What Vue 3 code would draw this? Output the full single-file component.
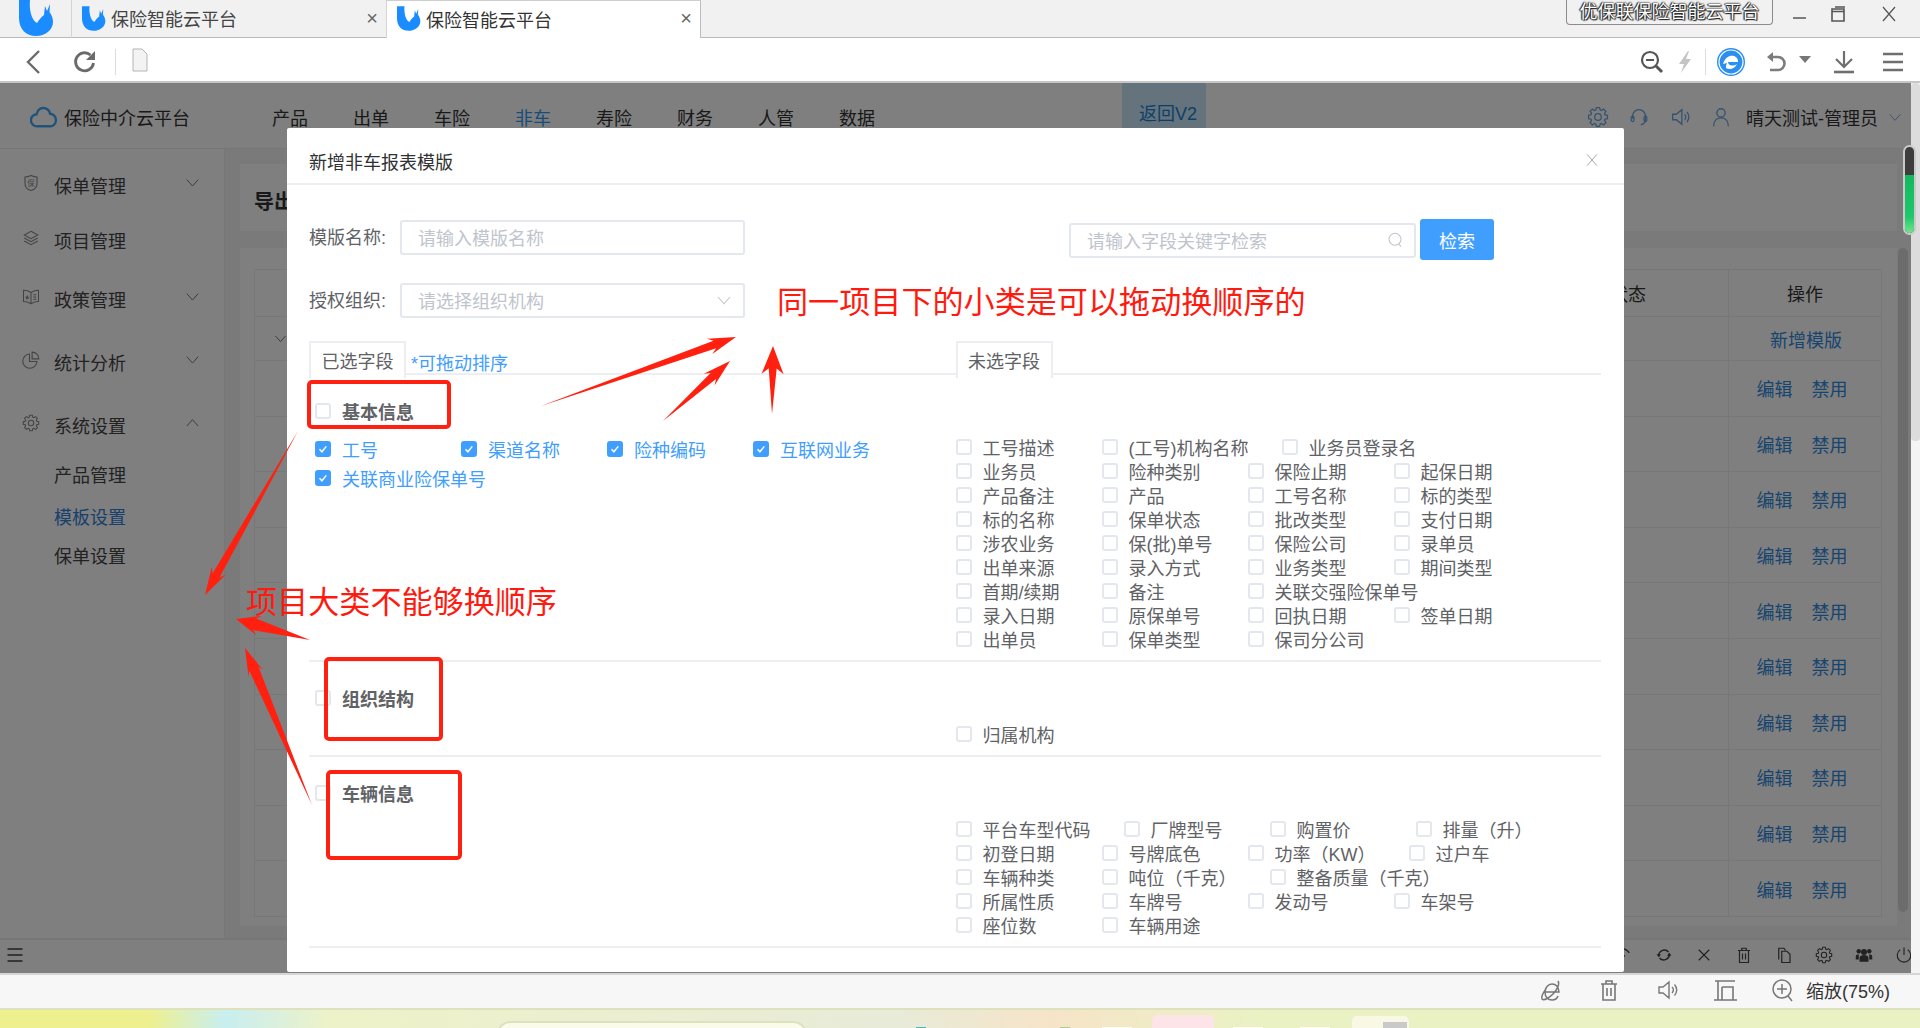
<template>
  <div class="screen">
    <!-- browser chrome -->
    <div class="tabbar">
      <div class="corner">
        <svg class="logo-big" viewBox="19 0 35 36"><path fill="#1a8cff" :d="logoPath" /></svg>
      </div>
      <div class="tab">
        <svg class="logo-small" viewBox="19 0 35 36"><path fill="#1a8cff" :d="logoPath" /></svg>
        <span class="tab-title">保险智能云平台</span>
        <span class="tab-x">×</span>
      </div>
      <div class="tab tab-active">
        <svg class="logo-small" viewBox="19 0 35 36"><path fill="#1a8cff" :d="logoPath" /></svg>
        <span class="tab-title">保险智能云平台</span>
        <span class="tab-x">×</span>
      </div>
      <div class="win-label">优保联保险智能云平台</div>
      <div class="win-btns">
        <svg class="win-icon" viewBox="0 0 20 20" v-html="icons.min"></svg>
        <svg class="win-icon" viewBox="0 0 20 20" v-html="icons.max"></svg>
        <svg class="win-icon" viewBox="0 0 20 20" v-html="icons.winClose"></svg>
      </div>
    </div>

    <div class="toolbar">
      <svg class="tool back" viewBox="0 0 24 24" v-html="icons.back"></svg>
      <svg class="tool reload" viewBox="0 0 24 24" v-html="icons.reload"></svg>
      <span class="tool-sep"></span>
      <svg class="doc" viewBox="0 0 16 24" v-html="icons.doc"></svg>
      <svg class="tool t-search" viewBox="0 0 24 24" v-html="icons.zoomOut"></svg>
      <svg class="tool t-bolt" viewBox="0 0 24 24" v-html="icons.bolt"></svg>
      <span class="tool-sep sep-right"></span>
      <svg class="t-edge" viewBox="0 0 30 30" v-html="icons.edge"></svg>
      <svg class="tool t-undo" viewBox="0 0 24 24" v-html="icons.undo"></svg>
      <span class="caret"></span>
      <svg class="tool t-down" viewBox="0 0 24 24" v-html="icons.download"></svg>
      <svg class="tool t-menu" viewBox="0 0 24 24" v-html="icons.menu"></svg>
    </div>

    <!-- app behind the dialog -->
    <div class="page">
      <header class="app-head">
        <svg class="cloud" viewBox="0 0 30 24" v-html="icons.cloud"></svg>
        <span class="brand">保险中介云平台</span>
        <nav class="nav">
          <span v-for="n in navItems" :key="n" :class="{ 'nav-on': n === '非车' }">{{ n }}</span>
        </nav>
        <div class="back-v2">返回V2</div>
        <div class="head-right">
          <svg v-for="i in ['gear', 'headset', 'speaker', 'user']" :key="i" class="head-icon" viewBox="0 0 24 24" v-html="icons[i]"></svg>
          <span class="user-name">晴天测试-管理员</span>
          <svg class="user-chev" viewBox="0 0 24 24" v-html="icons.chevDown"></svg>
        </div>
      </header>

      <div class="app-mid">
        <aside class="side">
          <div v-for="m in menu" :key="m.label" class="side-item" :class="{ 'side-on': m.active }" :style="{ height: m.h + 'px' }">
            <svg v-if="m.icon" class="side-icon" viewBox="0 0 24 24" v-html="icons[m.icon]"></svg>
            <span class="side-label" :class="{ 'side-sub': !m.icon }">{{ m.label }}</span>
            <svg v-if="m.chev" class="side-chev" viewBox="0 0 24 24" v-html="icons[m.chev]"></svg>
          </div>
        </aside>
        <main class="content">
          <div class="card card-top"><b>导出模版</b></div>
          <div class="card card-table">
            <div class="tbl-row tbl-head">
              <div class="cell-main"><span class="state">状态</span></div>
              <div class="cell-op">操作</div>
            </div>
            <div class="tbl-row tbl-first">
              <div class="cell-main"><svg class="row-chev" viewBox="0 0 24 24" v-html="icons.chevDown"></svg></div>
              <div class="cell-op link">新增模版</div>
            </div>
            <div v-for="r in 10" :key="r" class="tbl-row">
              <div class="cell-main"></div>
              <div class="cell-op link cell-edit"><span>编辑</span><span>禁用</span></div>
            </div>
          </div>
        </main>
      </div>

      <footer class="app-foot">
        <svg class="foot-menu" viewBox="0 0 24 24" v-html="icons.menu"></svg>
        <div class="foot-icons">
          <svg v-for="i in footIcons" :key="i" class="foot-icon" viewBox="0 0 24 24" v-html="icons[i]"></svg>
        </div>
      </footer>

      <div class="inner-scroll"></div>
      <div class="mask"></div>
      <div class="page-scroll"><div class="page-thumb"></div></div>
      <div class="speed"><div class="speed-fill"></div></div>
    </div>

    <div class="statusbar">
      <svg v-for="i in statusIcons" :key="i" class="status-icon" viewBox="0 0 24 24" v-html="icons[i]"></svg>
      <span class="zoom-text">缩放(75%)</span>
    </div>

    <div class="desktop">
      <div class="d-search"></div>
      <div class="d-dot d-teal"></div>
      <div class="d-dot d-green"></div>
      <div class="d-chip d-c1"></div>
      <div class="d-pink"></div>
      <div class="d-chip d-c2"></div>
      <div class="d-chip d-c3"></div>
      <div class="d-tile"><span></span></div>
      <div class="d-time">17:51</div>
    </div>

    <!-- dialog -->
    <section class="modal">
      <div class="modal-head">
        <span class="modal-title">新增非车报表模版</span>
        <svg class="modal-x" viewBox="0 0 20 20" v-html="icons.thinX"></svg>
      </div>
      <div class="modal-body">
        <div class="form-row">
          <label class="form-label">模版名称:</label>
          <div class="input"><span>请输入模版名称</span></div>
          <div class="input input-search">
            <span>请输入字段关键字检索</span>
            <svg class="input-icon" viewBox="0 0 24 24" v-html="icons.lens"></svg>
          </div>
          <button class="btn">检索</button>
        </div>
        <div class="form-row row-org">
          <label class="form-label">授权组织:</label>
          <div class="input">
            <span>请选择组织机构</span>
            <svg class="input-icon" viewBox="0 0 24 24" v-html="icons.chevDown"></svg>
          </div>
        </div>

        <div class="tabs">
          <div class="tabs-left">
            <span class="field-tab">已选字段</span>
            <span class="drag-tip">*可拖动排序</span>
          </div>
          <span class="field-tab">未选字段</span>
        </div>

        <div v-for="s in sections" :key="s.title" class="section">
          <div class="sec-left">
            <div class="check-item sec-title">
              <i class="box"></i>
              <b>{{ s.title }}</b>
            </div>
            <div v-if="s.picked" class="picked">
              <div v-for="p in s.picked" :key="p" class="check-item picked-item">
                <i class="box box-on">
                  <svg viewBox="0 0 16 16"><path d="M4.5 8.2l2.4 2.6 4.4-5.4" fill="none" stroke="#fff" stroke-width="1.5" /></svg>
                </i>
                <span>{{ p }}</span>
              </div>
            </div>
          </div>
          <div class="sec-right">
            <div v-for="(row, i) in s.rows" :key="i" class="opt-row">
              <div v-for="o in row" :key="o" class="check-item opt">
                <i class="box"></i>
                <span>{{ o }}</span>
              </div>
            </div>
          </div>
        </div>
      </div>
    </section>

    <!-- red hand-drawn annotations on top of the screenshot -->
    <svg class="marks" viewBox="0 0 1920 1028">
      <rect v-for="(b, i) in boxes" :key="i" :x="b[0]" :y="b[1]" :width="b[2]" :height="b[3]" rx="3" fill="none" stroke="#ff2010" stroke-width="4" />
      <polygon v-for="(a, i) in arrows" :key="i" :points="a" fill="#ff2010" />
    </svg>
    <div class="note note-a">同一项目下的小类是可以拖动换顺序的</div>
    <div class="note note-b">项目大类不能够换顺序</div>
  </div>
</template>

<script setup>
const logoPath = 'M19 0H30C29 8 31 20 37 23C39 20 41 17 44 15L45 6L47 11L50 4L49.5 12C52 15 53 19 53 22C53 30 45 36 36 36C26 36 19 29 19 18Z'

const navItems = ['产品', '出单', '车险', '非车', '寿险', '财务', '人管', '数据']

const menu = [
  { label: '保单管理', icon: 'shield', chev: 'chevDown', h: 54 },
  { label: '项目管理', icon: 'layers', h: 56 },
  { label: '政策管理', icon: 'book', chev: 'chevDown', h: 62 },
  { label: '统计分析', icon: 'pie', chev: 'chevDown', h: 64 },
  { label: '系统设置', icon: 'gear', chev: 'chevUp', h: 62 },
  { label: '产品管理', h: 36 },
  { label: '模板设置', active: true, h: 48 },
  { label: '保单设置', h: 30 }
]

const footIcons = ['wifi', 'sync', 'cross', 'trash', 'copy', 'gear', 'team', 'power']
const statusIcons = ['ie', 'trash', 'speaker', 'frame', 'zoomIn']

// gear outline, 8 teeth
const gearPath = () => {
  const pts = []
  for (let i = 0; i < 8; i++) {
    const a = (i * Math.PI) / 4
    for (const [off, r] of [[-0.3, 8], [-0.17, 10.5], [0.17, 10.5], [0.3, 8]]) {
      pts.push(`${(12 + r * Math.cos(a + off)).toFixed(1)} ${(12 + r * Math.sin(a + off)).toFixed(1)}`)
    }
  }
  return 'M' + pts.join('L') + 'Z'
}

const icons = {
  min: '<path d="M3 14h13" stroke="#555" stroke-width="1.5"/>',
  max: '<path d="M4 5h12v12H4zM4 7.5h12M7 3h10" fill="none" stroke="#555" stroke-width="1.6"/>',
  winClose: '<path d="M4 3l12 14M16 3L4 17" stroke="#555" stroke-width="1.2"/>',
  back: '<path d="M17 1L6 12l11 11" fill="none" stroke="#6b6b6b" stroke-width="2.4"/>',
  reload: '<path d="M20.500 13a9 9 0 1 1-3-8" fill="none" stroke="#6b6b6b" stroke-width="2.8"/><path d="M22 1v9h-9z" fill="#6b6b6b"/>',
  doc: '<path d="M1 1h9l5 5v17H1z" fill="#f3f3f3" stroke="#b5b5b5"/>',
  zoomOut: '<circle cx="10" cy="10" r="8" fill="none" stroke="#555" stroke-width="2.2"/><path d="M6 10h8" stroke="#555" stroke-width="2"/><path d="M16 16l6 6" stroke="#555" stroke-width="3"/>',
  bolt: '<path d="M15 1L6 14h5L8 23l10-14h-5l3-8z" fill="#c4c4c4"/>',
  edge: '<circle cx="15" cy="15" r="14" fill="#2b8ff0"/><circle cx="15" cy="15" r="12" fill="#2b8ff0" stroke="#fff" stroke-width="1.200"/><path d="M7 17C9 10 14 8 18 9c3 1 4 3 4 6H12c0 3 4 5 9 2-2 5-8 6-11 4 0-2 0-3 1-5z" fill="#fff"/>',
  undo: '<path d="M9 2L3 7l6 5V2z" fill="#7c7c7c"/><path d="M7 7h7a6.500 6.500 0 0 1 0 13H6" fill="none" stroke="#7c7c7c" stroke-width="2.600"/>',
  download: '<path d="M12 1v15M4 9l8 8 8-8" fill="none" stroke="#6f6f6f" stroke-width="2.200"/><path d="M2 22h20" stroke="#6f6f6f" stroke-width="2.600"/>',
  menu: '<path d="M2 4h20M2 12h20M2 20h20" stroke="#6f6f6f" stroke-width="2.600"/>',
  cloud: '<path d="M8 22a6.500 6.500 0 0 1-1-13C8 4 12 1.500 16 2.500c3 .8 5 3 5.500 6a6.800 6.800 0 0 1 .5 13.500z" fill="none" stroke="#3ea6f5" stroke-width="2.600"/>',
  gear: `<path d="${gearPath()}" fill="none" stroke="currentColor" stroke-width="1.400"/><circle cx="12" cy="12" r="3.600" fill="none" stroke="currentColor" stroke-width="1.400"/>`,
  headset: '<path d="M5 14v-3a7 7 0 0 1 14 0v3M19 14c0 4-2 6-5 6.500" fill="none" stroke="currentColor" stroke-width="1.500"/><rect x="3.500" y="11" width="3" height="6" rx="1.500" fill="none" stroke="currentColor" stroke-width="1.300"/><rect x="17.500" y="11" width="3" height="6" rx="1.500" fill="none" stroke="currentColor" stroke-width="1.300"/>',
  speaker: '<path d="M4 9v6h4l6 5V4L8 9zM17 9a4 4 0 0 1 0 6M19.500 6.500a8 8 0 0 1 0 11" fill="none" stroke="currentColor" stroke-width="1.400"/>',
  user: '<circle cx="12" cy="7.500" r="4.500" fill="none" stroke="currentColor" stroke-width="1.500"/><path d="M4 22c0-6 3.500-9 8-9s8 3 8 9" fill="none" stroke="currentColor" stroke-width="1.500"/>',
  chevDown: '<path d="M4 8l8 9 8-9" fill="none" stroke="currentColor" stroke-width="1.400"/>',
  chevUp: '<path d="M4 17l8-9 8 9" fill="none" stroke="currentColor" stroke-width="1.400"/>',
  shield: '<path d="M4 4c3 0 6-1 8-2 2 1 5 2 8 2v9c0 5-4 8-8 9-4-1-8-4-8-9z" fill="none" stroke="currentColor" stroke-width="1.500"/><text x="12" y="16" font-size="10" text-anchor="middle" fill="currentColor">保</text>',
  layers: '<path d="M12 3l9 5-9 5-9-5zM3 12l9 5 9-5M3 16l9 5 9-5" fill="none" stroke="currentColor" stroke-width="1.400"/>',
  book: '<path d="M2 3c4 0 7 1 10 3 3-2 6-3 10-3v15c-4 0-7 1-10 3-3-2-6-3-10-3zM12 6v15M15 9h4M15 12h4M15 15h4" fill="none" stroke="currentColor" stroke-width="1.400"/><path d="M7 9l1 2.500h2L8.500 13l.5 2.500L7 14l-2 1.500.5-2.500L4 11.500h2z" fill="currentColor"/>',
  pie: '<path d="M10 4a9.500 9.500 0 1 0 10 10H10z" fill="none" stroke="currentColor" stroke-width="1.500"/><path d="M13.500 1.500a9 9 0 0 1 9 9h-9z" fill="none" stroke="currentColor" stroke-width="1.500"/>',
  wifi: '<path d="M2 6c7-4 13-2 17 3M2 11c4-2 8-1 11 3M2 16c2 0 3 1 4 3" fill="none" stroke="currentColor" stroke-width="1.800"/>',
  sync: '<path d="M5 14a7.500 7.500 0 0 1 13-6M19 10a7.500 7.500 0 0 1-13 6" fill="none" stroke="currentColor" stroke-width="2"/><path d="M2 11h6l-3 4zM22 13h-6l3-4z" fill="currentColor"/>',
  cross: '<path d="M5 5l14 14M19 5L5 19" fill="none" stroke="currentColor" stroke-width="1.600"/>',
  trash: '<path d="M4 6h16M9 6V3h6v3M6 6v16h12V6M10 10v8M14 10v8" fill="none" stroke="currentColor" stroke-width="1.600"/>',
  copy: '<path d="M5 18V3h7l2 3M9 7h7l4 4v11H9z" fill="none" stroke="currentColor" stroke-width="1.600"/>',
  team: '<circle cx="12" cy="8" r="4" fill="currentColor"/><circle cx="5" cy="7" r="3" fill="currentColor"/><circle cx="19" cy="7" r="3" fill="currentColor"/><path d="M6 21v-5c0-3 3-4 6-4s6 1 6 4v5zM1 18v-4c0-2 2-3 4-3v7zM23 18v-4c0-2-2-3-4-3v7z" fill="currentColor"/>',
  power: '<path d="M12 2v10M7 5a9 9 0 1 0 10 0" fill="none" stroke="currentColor" stroke-width="1.500"/>',
  ie: '<path d="M6 14h14c-.5-5-3-8-7-8-4 0-7 4-7 8 0 5 3 8 7 8 3 0 5-1 6-4M19 3c2 3-1 9-5 13s-9 7-11 5c-1-2 1-6 4-10" fill="none" stroke="#777" stroke-width="1.500"/>',
  frame: '<path d="M2 3h20M5 3v19M9 9h11v13M1 22h23M9 9v13" fill="none" stroke="#777" stroke-width="1.600"/>',
  zoomIn: '<circle cx="11" cy="11" r="9" fill="none" stroke="#777" stroke-width="1.500"/><path d="M11 6v10M6 11h10" stroke="#777" stroke-width="1.500"/><path d="M17 18l4 5" stroke="#777" stroke-width="1.500"/>',
  thinX: '<path d="M4 3l12 14M16 3L4 17" stroke="#8b8f96" stroke-width="1"/>',
  lens: '<circle cx="12" cy="11" r="8" fill="none" stroke="currentColor" stroke-width="1.400"/><path d="M17 17l3 4" stroke="currentColor" stroke-width="1.400"/>'
}

const sections = [
  {
    title: '基本信息',
    picked: ['工号', '渠道名称', '险种编码', '互联网业务', '关联商业险保单号'],
    rows: [
      ['工号描述', '(工号)机构名称', '业务员登录名'],
      ['业务员', '险种类别', '保险止期', '起保日期'],
      ['产品备注', '产品', '工号名称', '标的类型'],
      ['标的名称', '保单状态', '批改类型', '支付日期'],
      ['涉农业务', '保(批)单号', '保险公司', '录单员'],
      ['出单来源', '录入方式', '业务类型', '期间类型'],
      ['首期/续期', '备注', '关联交强险保单号'],
      ['录入日期', '原保单号', '回执日期', '签单日期'],
      ['出单员', '保单类型', '保司分公司']
    ]
  },
  {
    title: '组织结构',
    rows: [['归属机构']]
  },
  {
    title: '车辆信息',
    rows: [
      ['平台车型代码', '厂牌型号', '购置价', '排量（升）'],
      ['初登日期', '号牌底色', '功率（KW）', '过户车'],
      ['车辆种类', '吨位（千克）', '整备质量（千克）'],
      ['所属性质', '车牌号', '发动号', '车架号'],
      ['座位数', '车辆用途']
    ]
  }
]

// x, y, w, h of the red frames
const boxes = [
  [309, 382, 140, 45],
  [326, 659, 115, 80],
  [328, 772, 132, 86]
]

// tapered arrow from tail to tip
const arrow = ([tx, ty], [hx, hy], head = 28, barb = 8, neck = 4) => {
  const len = Math.hypot(hx - tx, hy - ty)
  const ux = (hx - tx) / len
  const uy = (hy - ty) / len
  const px = -uy
  const py = ux
  const at = (along, side) => `${(tx + ux * along + px * side).toFixed(1)},${(ty + uy * along + py * side).toFixed(1)}`
  return [
    at(0, 0),
    at(len - head * 0.8, neck),
    at(len - head, barb),
    at(len, 0),
    at(len - head, -barb),
    at(len - head * 0.8, -neck)
  ].join(' ')
}

const arrows = [
  arrow([541, 406], [736, 337]),
  arrow([663, 421], [730, 361]),
  arrow([772, 414], [773, 346], 28, 11, 4),
  arrow([298, 431], [205, 595]),
  arrow([310, 640], [236, 619], 24, 10, 6),
  arrow([312, 805], [245, 648], 28, 8, 5)
]
</script>

<style scoped>
.screen {
  position: relative;
  width: 1920px;
  height: 1028px;
  overflow: hidden;
  display: flex;
  flex-direction: column;
  background: #fff;
  font-family: "Liberation Sans", "Noto Sans CJK SC", sans-serif;
  font-size: 18px;
  color: #303133;
}

.tabbar {
  height: 38px;
  flex: none;
  display: flex;
  background: #f1f1f1;
  border-bottom: 1px solid #b9b9b9;
  box-sizing: border-box;
}
.corner {
  width: 71px;
  padding-left: 19px;
  box-sizing: border-box;
}
.logo-big { width: 35px; height: 36px; display: block; }
.logo-small { width: 24px; height: 25px; flex: none; }
.tab {
  width: 315px;
  height: 38px;
  box-sizing: border-box;
  display: flex;
  align-items: center;
  padding: 0 8px 2px 10px;
  border-left: 1px solid #d4d4d4;
  font-size: 18px;
  color: #444;
}
.tab-active {
  background: #fff;
  border-top: 1px solid #cfcfcf;
  border-right: 1px solid #bdbdbd;
  color: #333;
}
.tab-title { margin-left: 5px; }
.tab-x { margin-left: auto; font-size: 20px; color: #666; }
.win-label {
  margin-left: 865px;
  width: 207px;
  height: 25px;
  box-sizing: border-box;
  border: 1px solid #8c8c8c;
  border-top: 0;
  border-radius: 0 0 4px 4px;
  text-align: center;
  line-height: 24px;
  color: #fff;
  text-shadow: 0 0 2px #111, 0 0 1px #111, 1px 1px 1px #222, -1px 0 1px #222;
}
.win-btns {
  display: flex;
  gap: 18px;
  margin-left: 17px;
  padding-top: 4px;
}
.win-btns svg:last-child { margin-left: 13px; }
.win-icon { width: 20px; height: 20px; }

.toolbar {
  height: 45px;
  flex: none;
  box-sizing: border-box;
  display: flex;
  align-items: center;
  border-bottom: 2px solid #c6c6c6;
  padding-top: 5px;
}
.tool { width: 24px; height: 24px; flex: none; }
.back { margin-left: 22px; }
.reload { margin-left: 27px; }
.tool-sep { width: 1px; height: 26px; background: #ddd; margin-left: 18px; }
.doc { width: 16px; height: 24px; margin-left: 16px; margin-top: -4px; }
.t-search { margin-left: 1492px; }
.t-bolt { margin-left: 9px; }
.sep-right { margin-left: 8px; }
.t-edge { width: 30px; height: 30px; margin-left: 10px; }
.t-undo { margin-left: 18px; }
.caret {
  width: 0;
  height: 0;
  margin-left: 11px;
  margin-top: -6px;
  border: 6px solid transparent;
  border-top: 7px solid #777;
  border-bottom: 0;
}
.t-down { margin-left: 21px; }
.t-menu { margin-left: 25px; }

.page {
  position: relative;
  height: 890px;
  flex: none;
  display: flex;
  flex-direction: column;
  background: #fff;
  color: #555;
}
.app-head {
  height: 66px;
  flex: none;
  box-sizing: border-box;
  display: flex;
  align-items: center;
  padding: 2px 0 0 30px;
  background: #fff;
  border-bottom: 1px solid #ececec;
}
.cloud { width: 28px; height: 24px; flex: none; }
.brand { margin-left: 6px; color: #333; }
.nav { display: flex; gap: 45px; margin-left: 82px; color: #333; }
.nav-on { color: #2f9bf5; }
.back-v2 {
  align-self: flex-start;
  margin-top: -2px;
  margin-left: 247px;
  width: 84px;
  height: 70px;
  padding: 16px 0 0 17px;
  box-sizing: border-box;
  background: #c8e6f8;
  color: #1b7fd4;
}
.head-right {
  margin-left: auto;
  padding-right: 17px;
  display: flex;
  align-items: center;
  color: #6aa5dd;
}
.head-icon { width: 22px; height: 22px; margin-right: 19px; }
.user-name { color: #333; margin-left: -5px; }
.user-chev { width: 16px; height: 16px; margin-left: 9px; }

.app-mid { flex: 1; display: flex; min-height: 0; }
.side {
  width: 225px;
  flex: none;
  box-sizing: border-box;
  padding-top: 9px;
  background: #fff;
  border-right: 1px solid #eee;
}
.side-item {
  display: flex;
  align-items: center;
  padding-left: 22px;
  color: #888;
}
.side-icon { width: 18px; height: 18px; flex: none; margin-top: -4px; }
.side-label { margin-left: 14px; color: #444; }
.side-sub { margin-left: 32px; }
.side-on .side-label { color: #2f80d8; }
.side-chev { width: 17px; height: 17px; margin-left: 58px; margin-top: -6px; color: #777; }

.content {
  flex: 1;
  min-width: 0;
  background: #f4f4f4;
  padding: 15px 23px 0 15px;
}
.card { background: #fff; }
.card-top {
  height: 67px;
  padding: 22px 0 0 14px;
  box-sizing: border-box;
  font-size: 20px;
  color: #333;
}
.card-table {
  margin-top: 17px;
  height: 678px;
  padding: 21px 15px 0 14px;
  box-sizing: border-box;
}
.tbl-row {
  display: flex;
  height: 55.6px;
  box-sizing: border-box;
  border: 1px solid #eceef2;
  border-top: 0;
}
.tbl-head { height: 48px; border-top: 1px solid #eceef2; color: #333; }
.tbl-first { height: 44px; }
.cell-main { flex: 1; display: flex; align-items: center; min-width: 0; }
.state { margin-left: 1355px; }
.row-chev { width: 15px; height: 15px; margin-left: 18px; color: #666; }
.cell-op {
  width: 153px;
  flex: none;
  box-sizing: border-box;
  border-left: 1px solid #eceef2;
  display: flex;
  align-items: center;
  justify-content: center;
  gap: 19px;
}
.tbl-first .cell-op { padding-left: 2px; }
.cell-edit { padding-right: 6px; }
.link { color: #2f8ae0; }

.app-foot {
  height: 35px;
  flex: none;
  box-sizing: border-box;
  display: flex;
  align-items: center;
  padding: 0 7px 3px 6px;
  border-top: 2px solid #ececec;
  background: #fff;
}
.foot-menu { width: 18px; height: 18px; color: #333; }
.foot-icons { margin-left: auto; display: flex; gap: 22px; color: #444; }
.foot-icon { width: 18px; height: 18px; }

.inner-scroll {
  position: absolute;
  right: 12px;
  top: 165px;
  bottom: 61px;
  width: 10px;
  border-radius: 5px;
  background: #d8d8d8;
}
.mask {
  position: absolute;
  inset: 0;
  background: rgba(0, 0, 0, 0.5);
}
.page-scroll {
  position: absolute;
  right: 0;
  top: 0;
  bottom: 0;
  width: 9px;
  background: #f4f4f4;
}
.page-thumb { height: 358px; border-radius: 4px; background: #dcdcdc; }
.speed {
  position: absolute;
  left: 1903px;
  top: 62px;
  width: 13px;
  height: 90px;
  box-sizing: border-box;
  border: 2px solid #c9c9c9;
  border-radius: 7px;
  background: #3d3d3d;
  overflow: hidden;
}
.speed-fill {
  margin-top: 28px;
  height: 60px;
  background: linear-gradient(#15b75f, #1ec86c 70%, #7fe88f);
}

.statusbar {
  height: 35px;
  flex: none;
  box-sizing: border-box;
  display: flex;
  align-items: center;
  justify-content: flex-end;
  gap: 34px;
  padding: 0 30px 3px 0;
  background: #f7f7f7;
  border-top: 2px solid #d6d6d6;
  color: #777;
}
.status-icon { width: 24px; height: 24px; }
.zoom-text { margin-left: -23px; color: #333; }

.desktop {
  flex: 1;
  display: flex;
  align-items: flex-start;
  overflow: hidden;
  border-top: 2px solid #dde1bd;
  background: linear-gradient(90deg, #eef08f 0, #eef08f 150px, #c8eef0 225px, #eef2c8 330px, #e8ebd8 900px, #f6e4c8 1050px, #eaf2c4 1260px, #eaf2c4 1920px);
}
.d-search {
  width: 312px;
  height: 30px;
  margin: 11px 0 0 496px;
  box-sizing: border-box;
  border: 2px solid #dde1c0;
  border-radius: 16px;
  background: #fafbe9;
}
.d-dot { width: 10px; height: 8px; margin-top: 17px; }
.d-teal { margin-left: 108px; background: #3fb8c4; }
.d-green { margin-left: 134px; background: #a6cf8e; }
.d-chip { width: 30px; height: 8px; margin-top: 17px; background: #fdfdf5; }
.d-c1 { margin-left: 32px; }
.d-pink {
  width: 62px;
  height: 30px;
  margin: 5px 0 0 20px;
  border-radius: 5px 5px 0 0;
  background: #fde4e8;
}
.d-c2 { margin-left: 19px; }
.d-c3 { margin-left: 37px; }
.d-tile {
  width: 57px;
  height: 30px;
  margin: 6px 0 0 22px;
  padding: 6px 2px 0 31px;
  box-sizing: border-box;
  border-radius: 5px;
  background: #f8f8e4;
}
.d-tile span { display: block; height: 20px; background: #c9c9c9; }
.d-time {
  margin: 13px 0 0 451px;
  font-size: 15px;
  line-height: 20px;
  color: #222;
}

.modal {
  position: absolute;
  left: 287px;
  top: 128px;
  width: 1337px;
  height: 844px;
  background: #fff;
  border-radius: 2px;
  color: #606266;
  overflow: hidden;
}
.modal-head {
  height: 57px;
  box-sizing: border-box;
  display: flex;
  align-items: center;
  padding: 11px 22px 0;
  border-bottom: 2px solid #eceef2;
}
.modal-title { color: #303133; }
.modal-x { width: 16px; height: 16px; margin-left: auto; margin-top: -2px; margin-right: 2px; }
.modal-body { padding: 0 23px 0 22px; }
.form-row { display: flex; align-items: flex-start; padding-top: 34px; }
.row-org { padding-top: 23px; }
.form-label { width: 91px; height: 35px; flex: none; line-height: 37px; margin-top: 1px; }
.row-org .form-label { margin-top: 0; }
.input {
  width: 345px;
  height: 35px;
  box-sizing: border-box;
  display: flex;
  align-items: center;
  justify-content: space-between;
  padding: 0 10px 2px 16px;
  margin-top: 1px;
  border: 2px solid #e4e7ed;
  border-radius: 3px;
  color: #c0c4cc;
}
.row-org .input { margin-top: 0; }
.input-search { margin: 4px 0 0 324px; width: 347px; }
.input-icon { width: 18px; height: 18px; }
.btn {
  width: 74px;
  height: 41px;
  margin-left: 4px;
  border: 0;
  border-radius: 3px;
  background: #409eff;
  color: #fff;
  font: inherit;
}
.tabs {
  display: flex;
  height: 32px;
  margin-top: 23px;
  border-bottom: 2px solid #eceef2;
}
.tabs-left { width: 646.5px; flex: none; display: flex; }
.field-tab {
  height: 37px;
  width: 97px;
  box-sizing: border-box;
  text-align: center;
  line-height: 38px;
  background: #fff;
  border: 2px solid #eceef2;
  border-bottom: 0;
  flex: none;
}
.drag-tip { color: #409eff; margin: 10px 0 0 5px; line-height: 26px; }

.section {
  display: flex;
  border-bottom: 2px solid #eceef2;
}
.sec-left { width: 646.5px; flex: none; box-sizing: border-box; padding: 23.5px 0 0 6px; }
.sec-right { padding: 60px 0 9px; flex: 1; }
.check-item { display: flex; align-items: center; height: 24px; white-space: nowrap; }
.box {
  display: block;
  flex: none;
  width: 16px;
  height: 16px;
  margin-right: 11px;
  box-sizing: border-box;
  border: 2px solid #e4e7ed;
  border-radius: 3px;
  background: #fff;
}
.box-on { background: #409eff; border-color: #409eff; position: relative; }
.box-on svg { position: absolute; left: -2px; top: -2px; width: 16px; height: 16px; }
.sec-title b { color: #606266; font-weight: 700; }
.picked {
  display: flex;
  flex-wrap: wrap;
  gap: 5px 0;
  width: 600px;
  margin-top: 14px;
  color: #409eff;
}
.picked-item { width: 146px; }
.opt-row { display: flex; }
.opt { min-width: 146px; padding-right: 33px; box-sizing: border-box; }

.marks {
  position: absolute;
  left: 0;
  top: 0;
  width: 1920px;
  height: 1028px;
  pointer-events: none;
}
.note {
  position: absolute;
  font-size: 31.1px;
  line-height: 40px;
  color: #ff1a10;
  white-space: nowrap;
}
.note-a { left: 777px; top: 283px; }
.note-b { left: 246px; top: 583px; }
</style>

<style>
html, body { margin: 0; overflow: hidden; }
</style>
